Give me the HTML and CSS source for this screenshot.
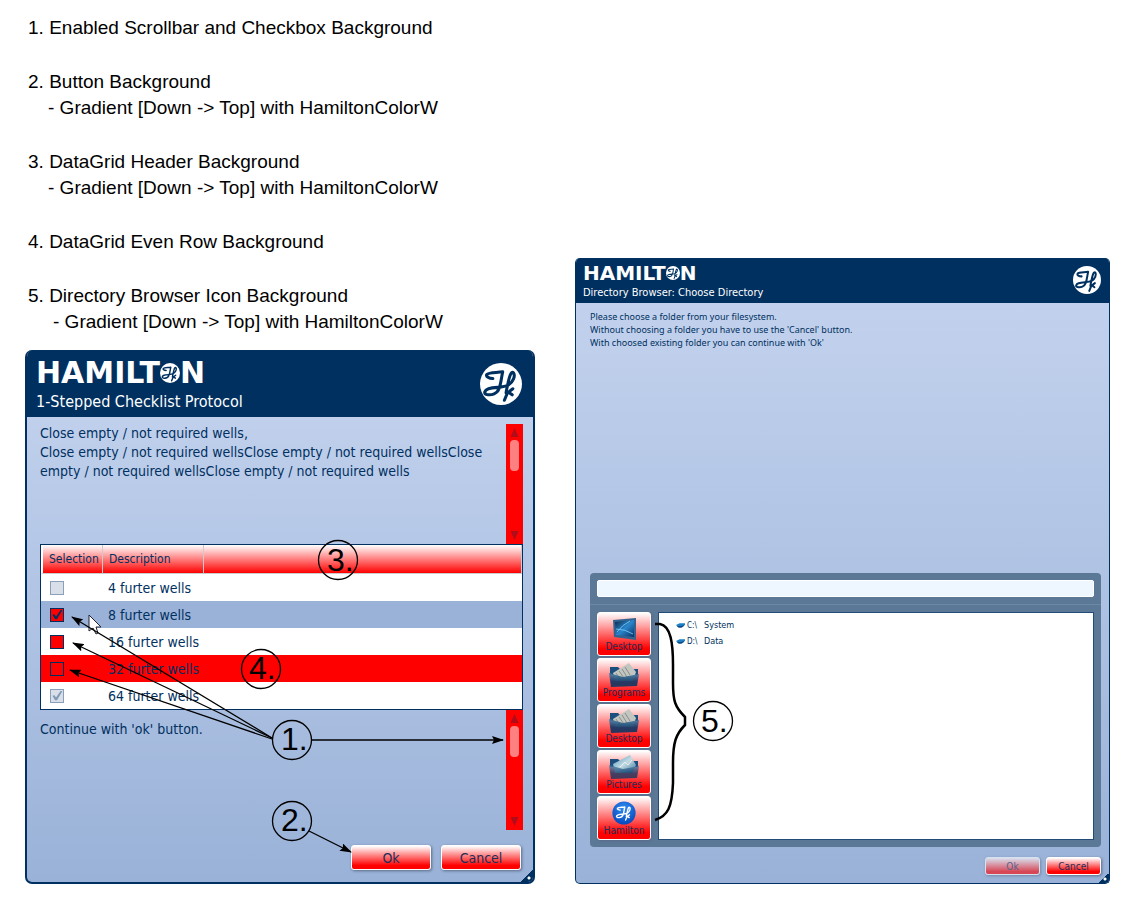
FILE: index.html
```html
<!DOCTYPE html>
<html lang="en">
<head>
<meta charset="utf-8">
<title>Color settings</title>
<link rel="stylesheet" href="styles.css">
</head>
<body>
<svg class="defs" aria-hidden="true">
  <defs>
    <linearGradient id="screen" x1="0" y1="0" x2="1" y2="1"><stop offset="0" stop-color="#0b2346"/><stop offset=".5" stop-color="#2a86cc"/><stop offset="1" stop-color="#0a2f66"/></linearGradient>
    <linearGradient id="folder" x1="0" y1="0" x2="0" y2="1"><stop offset="0" stop-color="#4d83ab"/><stop offset=".6" stop-color="#083564"/></linearGradient>
    <linearGradient id="photo" x1="0" y1="0" x2="1" y2="1"><stop offset="0" stop-color="#4f93c0"/><stop offset=".5" stop-color="#c3dbe2"/><stop offset="1" stop-color="#35709b"/></linearGradient>
    <radialGradient id="ball" cx=".5" cy=".3" r=".7"><stop offset="0" stop-color="#2f8cf0"/><stop offset="1" stop-color="#0648bd"/></radialGradient>
    <marker id="arrow" viewBox="0 0 12 8" refX="11" refY="4" markerWidth="12" markerHeight="8" markerUnits="userSpaceOnUse" orient="auto"><path d="M0 0L12 4L0 8L2 4Z"/></marker>
  </defs>
  <symbol id="h-script" viewBox="0 0 124 124">
    <g fill="none" stroke="currentColor" stroke-width="9" stroke-linecap="round" stroke-linejoin="round">
      <path d="M38 46C26 46 17 40 20 34C26 27 49 29 67 26C63 43 62 61 56 76C51 90 35 96 20 93C10 90 13 80 25 76C45 70 68 74 84 65C98 56 105 38 99 29C91 22 86 44 82 62C80 72 78 80 77 88M97 76L84 86L95 94M81 88L72 110"/>
    </g>
  </symbol>
  <symbol id="h-disc" viewBox="0 0 124 124"><circle cx="62" cy="62" r="62" fill="#fff"/><use href="#h-script" width="124" height="124"/></symbol>
  <symbol id="folder-docs" viewBox="0 0 32 24">
    <path fill="#1d4f7e" d="M2 4h8l2 2h18v6H2z"/>
    <path fill="#c3c6c0" d="M5 10L21 0l7 9-3 9H7z"/>
    <path stroke="#70746f" stroke-width=".7" d="M8 10l4 6M11 8l5 7M14 6l5 8M17 4l5 8"/>
    <path fill="url(#folder)" fill-opacity=".88" d="M1 10l14 4 16-3-2 12-26 1z"/>
  </symbol>
  <symbol id="folder-photos" viewBox="0 0 32 24">
    <path fill="#1d4f7e" d="M2 4h8l2 2h18v6H2z"/>
    <path fill="url(#photo)" d="M5 9L22 0l6 10-4 8H7z"/>
    <path stroke="#e8eff0" fill="none" d="M12 12l5-5 3 3 4-5"/>
    <path fill="url(#folder)" fill-opacity=".75" d="M1 10l14 4 16-3-2 12-26 1z"/>
  </symbol>
</svg>

<main class="page">
  <section class="column">
    <ol class="notes">
      <li>Enabled Scrollbar and Checkbox Background</li>
      <li>Button Background<p>- Gradient [Down -&gt; Top] with HamiltonColorW</p></li>
      <li>DataGrid Header Background<p>- Gradient [Down -&gt; Top] with HamiltonColorW</p></li>
      <li>DataGrid Even Row Background</li>
      <li>Directory Browser Icon Background<p class="deep">- Gradient [Down -&gt; Top] with HamiltonColorW</p></li>
    </ol>

    <div class="stage">
      <div class="dialog">
        <header class="head">
          <div>
            <div class="brand"><span>HAMILT</span><svg class="brand-o"><use href="#h-disc"/></svg><span>N</span></div>
            <h2 class="title">1-Stepped Checklist Protocol</h2>
          </div>
          <svg class="seal"><use href="#h-disc"/></svg>
        </header>
        <div class="body">
          <div class="scroll-area">
            <p>Close empty / not required wells,<br>Close empty / not required wellsClose empty / not required wellsClose<br>empty / not required wellsClose empty / not required wells</p>
            <div class="scrollbar"><i class="up"></i><i class="thumb"></i><i class="down"></i></div>
          </div>
          <table class="grid">
            <thead><tr><th class="c-sel">Selection</th><th class="c-desc">Description</th><th></th></tr></thead>
            <tbody>
              <tr><td><input type="checkbox" id="w4" disabled></td><td colspan="2"><label for="w4">4 furter wells</label></td></tr>
              <tr class="selected"><td><input type="checkbox" id="w8" checked></td><td colspan="2"><label for="w8">8 furter wells</label></td></tr>
              <tr><td><input type="checkbox" id="w16"></td><td colspan="2"><label for="w16">16 furter wells</label></td></tr>
              <tr class="even"><td><input type="checkbox" id="w32"></td><td colspan="2"><label for="w32">32 furter wells</label></td></tr>
              <tr><td><input type="checkbox" id="w64" checked disabled></td><td colspan="2"><label for="w64">64 furter wells</label></td></tr>
            </tbody>
          </table>
          <div class="scroll-area after">
            <p>Continue with 'ok' button.</p>
            <div class="scrollbar"><i class="up"></i><i class="thumb"></i><i class="down"></i></div>
          </div>
          <div class="actions"><button type="button">Ok</button><button type="button">Cancel</button></div>
        </div>
        <i class="grip"></i>
      </div>
      <svg class="marks" aria-label="Callouts 1 to 4">
        <path class="cursor" d="M64 265V281L68 278L71 284L73 283L71 277H76Z"/>
        <g class="lines">
          <path d="M247 388L47 267"/><path d="M247 388L48 293"/><path d="M247 389L45 320"/>
          <path d="M287 390H478"/><path d="M284 481L326 502"/>
        </g>
        <g class="rings"><circle cx="267" cy="390" r="19.5"/><circle cx="267" cy="471" r="19.5"/><circle cx="313" cy="210" r="19.5"/><circle cx="236" cy="319" r="19.5"/></g>
        <g class="nums"><text x="256" y="400">1.</text><text x="256" y="481">2.</text><text x="302" y="221">3.</text><text x="224" y="329">4.</text></g>
      </svg>
    </div>
  </section>

  <section class="column right">
    <div class="stage">
      <div class="dialog small">
        <header class="head">
          <div>
            <div class="brand"><span>HAMILT</span><svg class="brand-o"><use href="#h-disc"/></svg><span>N</span></div>
            <h2 class="title">Directory Browser: Choose Directory</h2>
          </div>
          <svg class="seal"><use href="#h-disc"/></svg>
        </header>
        <div class="body">
          <p class="message">Please choose a folder from your filesystem.<br>Without choosing a folder you have to use the 'Cancel' button.<br>With choosed existing folder you can continue with 'Ok'</p>
          <div class="browser">
            <div class="path-row"><input type="text" aria-label="Path"></div>
            <div class="browse">
              <nav class="places">
                <button type="button"><svg viewBox="0 0 32 24"><path fill="#34628e" d="M5 3L28 1V23L6 20Z"/><path fill="url(#screen)" d="M7 5L26 3V20L8 18Z"/><path stroke="#7cd0f5" stroke-width=".8" fill="none" d="M9 15Q14 8 22 4M8 12Q17 12 25 17"/></svg>Desktop</button>
                <button type="button"><svg><use href="#folder-docs"/></svg>Programs</button>
                <button type="button"><svg><use href="#folder-docs"/></svg>Desktop</button>
                <button type="button"><svg><use href="#folder-photos"/></svg>Pictures</button>
                <button type="button"><svg class="ball" viewBox="0 0 124 124"><circle cx="62" cy="62" r="60" fill="url(#ball)"/><use href="#h-script" x="12" y="10" width="100" height="100"/></svg>Hamilton</button>
              </nav>
              <ul class="drives">
                <li><svg viewBox="0 0 10 6"><path fill="#1c7fc5" d="M0 3L4 1H10V3L6 5H2Z"/><path fill="#0b4c85" d="M1 4H6L9 3V4L6 6H3Z"/></svg><small>C:\</small><span>System</span></li>
                <li><svg viewBox="0 0 10 6"><path fill="#1c7fc5" d="M0 3L4 1H10V3L6 5H2Z"/><path fill="#0b4c85" d="M1 4H6L9 3V4L6 6H3Z"/></svg><small>D:\</small><span>Data</span></li>
              </ul>
            </div>
          </div>
          <div class="actions"><button type="button" disabled>Ok</button><button type="button">Cancel</button></div>
        </div>
        <i class="grip"></i>
      </div>
      <svg class="marks" aria-label="Callout 5">
        <path class="brace" d="M80 366H85C96 368 98 386 98 407V425C98 443 100 449 110 459V467C101 476 98 484 98 505V525C97 549 93 558 80 562"/>
        <g class="rings"><circle cx="138" cy="463" r="19.5"/></g>
        <g class="nums"><text x="126" y="474">5.</text></g>
      </svg>
    </div>
  </section>
</main>
</body>
</html>
```
FILE: styles.css
```css
* { box-sizing: border-box; }
body { margin: 0; background: #fff; color: #000; font-family: "Liberation Sans", Arial, sans-serif; }
p, h2, ol, ul { margin: 0; padding: 0; }
.defs { position: absolute; width: 0; height: 0; }

.page {
  display: grid;
  grid-template-columns: 510fr 535fr;
  gap: 40px;
  padding: 0 25px 25px;
}
.column { display: flex; flex-direction: column; }
.right { padding-top: 258px; }
.stage { position: relative; flex: 1; display: flex; }

.notes { padding: 14px 0 15px 3px; font-size: 19px; line-height: 27px; list-style: none; counter-reset: n; }
.notes li { counter-increment: n; margin-bottom: 27px; }
.notes li:last-child { margin-bottom: 0; }
.notes li::before { content: counter(n) ". "; }
.notes p { padding-left: 20px; line-height: 26px; }
.notes .deep { padding-left: 25px; }

.dialog {
  position: relative;
  flex: 1;
  display: flex;
  flex-direction: column;
  overflow: hidden;
  border: solid #003060;
  border-width: 0 2px 2px;
  border-radius: 7px;
  background: linear-gradient(#c5d4ef, #9ab2d8);
  color: #003060;
  font-family: "DejaVu Sans Condensed", "Noto Sans", sans-serif;
  font-size: 14px;
}
.head {
  display: flex;
  justify-content: space-between;
  align-items: flex-start;
  padding: 12px 11px 5px 9px;
  background: #003060;
  color: #fff;
}
.brand { display: flex; align-items: center; height: 21px; font: bold 30px/21px "DejaVu Sans", sans-serif; }
.brand-o { width: 20px; height: 20px; }
.title { margin-top: 8px; font-size: 16px; line-height: 21px; font-weight: normal; }
.seal { width: 42px; height: 42px; margin-top: 1px; }
.seal, .brand-o { color: #003060; }

.body { flex: 1; display: flex; flex-direction: column; padding: 7px 10px 12px 13px; }
.scroll-area { display: flex; justify-content: space-between; min-height: 120px; line-height: 19px; }
.after p { padding-top: 10px; }
.scrollbar { display: flex; flex-direction: column; align-items: center; width: 17px; padding: 4px 0; background: #f00; }
.up, .down { width: 8px; height: 9px; background: #b00c1a; }
.up { clip-path: polygon(50% 0, 100% 100%, 0 100%); }
.down { margin-top: auto; clip-path: polygon(0 0, 100% 0, 50% 100%); }
.thumb { width: 9px; height: 31px; margin-top: 3px; border-radius: 4px; background: #ff8080; }

.grid { width: 100%; table-layout: fixed; border: 1px solid #003060; border-spacing: 0; background: #fff; }
.grid th { height: 29px; padding: 0 6px; border-right: 1px solid #ccc; border-bottom: 1px solid #ccc; background: linear-gradient(#fff, #f00); font-size: 12px; font-weight: normal; text-align: left; }
.grid th:first-child { border-left: 2px solid #fff; }
.grid .c-sel { width: 62px; }
.grid .c-desc { width: 101px; }
.grid td { height: 27px; padding: 0 5px; }
.grid td:first-child { padding-left: 9px; }
.grid .selected { background: #9ab2d8; }
.grid .even { background: #f00; }
.grid input {
  appearance: none;
  display: block;
  width: 14px;
  height: 14px;
  margin: 0;
  border: 1px solid #003060;
  background: #f00;
  color: #003060;
}
.grid input:disabled { border-color: #8ba0b8; background: #d8dfe8; color: #8099b5; }
.grid input:checked::before {
  content: "";
  display: block;
  width: 12px;
  height: 12px;
  background: currentColor;
  clip-path: polygon(12% 52%, 28% 48%, 42% 66%, 80% 12%, 94% 14%, 50% 90%, 34% 90%);
}

.actions { display: flex; justify-content: flex-end; gap: 10px; margin-top: 15px; padding-right: 2px; }
.dialog button {
  border: 1px solid #fff;
  border-radius: 3px;
  background: linear-gradient(#fff, #f00 85%);
  box-shadow: 1px 1px 3px #5a6b88;
  color: #1c2d58;
  font: inherit;
  padding: 0;
}
.actions button { width: 80px; height: 25px; }

.grip { position: absolute; right: 0; bottom: 0; width: 13px; height: 13px; background: radial-gradient(circle at 9px 9px, #fff 1px, transparent 2px), linear-gradient(135deg, transparent 50%, #003060 50%); }

.marks { position: absolute; inset: 0; width: 100%; height: 100%; overflow: visible; pointer-events: none; }
.lines path { stroke: #000; stroke-width: 1.3; marker-end: url(#arrow); }
.rings circle { fill: none; stroke: #000; stroke-width: 1.3; }
.nums { font-size: 32px; }
.cursor { fill: #fff; stroke: #223; }
.brace { fill: none; stroke: #000; stroke-width: 2.5; }

.small { font-size: 9px; border-width: 0 1px 1px; border-radius: 5px; }
.small .head { padding: 8px 8px 3px 7px; }
.small .brand { height: 14px; font-size: 20px; line-height: 14px; }
.small .brand-o { width: 14px; height: 14px; }
.small .title { margin-top: 6px; font-size: 11px; line-height: 14px; }
.small .seal { width: 28px; height: 28px; margin-top: 0; }
.small .body { padding: 7px 8px 8px 14px; }
.message { flex: 1; font-family: "Noto Sans", sans-serif; line-height: 13px; }
.browser { border-radius: 4px; background: #5b7896; }
.path-row { padding: 7px; border-bottom: 1px solid #6d88a4; }
.path-row input { display: block; width: 100%; height: 17px; border: 1px solid #fff; border-radius: 2px; background: #eef6ff; }
.browse { display: flex; gap: 7px; padding: 7px; }
.places { display: flex; flex-direction: column; gap: 2px; }
.small .places button { display: flex; flex-direction: column; align-items: center; justify-content: space-between; width: 54px; height: 44px; padding: 4px 0 2px; font-size: 10px; line-height: 12px; }
.places svg { width: 32px; height: 24px; color: #fff; }
.drives { flex: 1; list-style: none; padding: 4px 17px; border: 1px solid #234b78; background: #fff; }
.drives li { display: flex; align-items: center; gap: 2px; height: 16px; }
.drives svg { width: 9px; height: 6px; }
.drives small { width: 15px; font-size: 8px; }
.small .actions { gap: 6px; margin-top: 10px; padding-right: 0; }
.small .actions button { width: 55px; height: 18px; font-size: 10px; }
.small .actions button:disabled { opacity: .6; }
.small .grip { width: 10px; height: 10px; background: radial-gradient(circle at 6px 6px, #fff 1px, transparent 2px), linear-gradient(135deg, transparent 50%, #003060 50%); }
```
